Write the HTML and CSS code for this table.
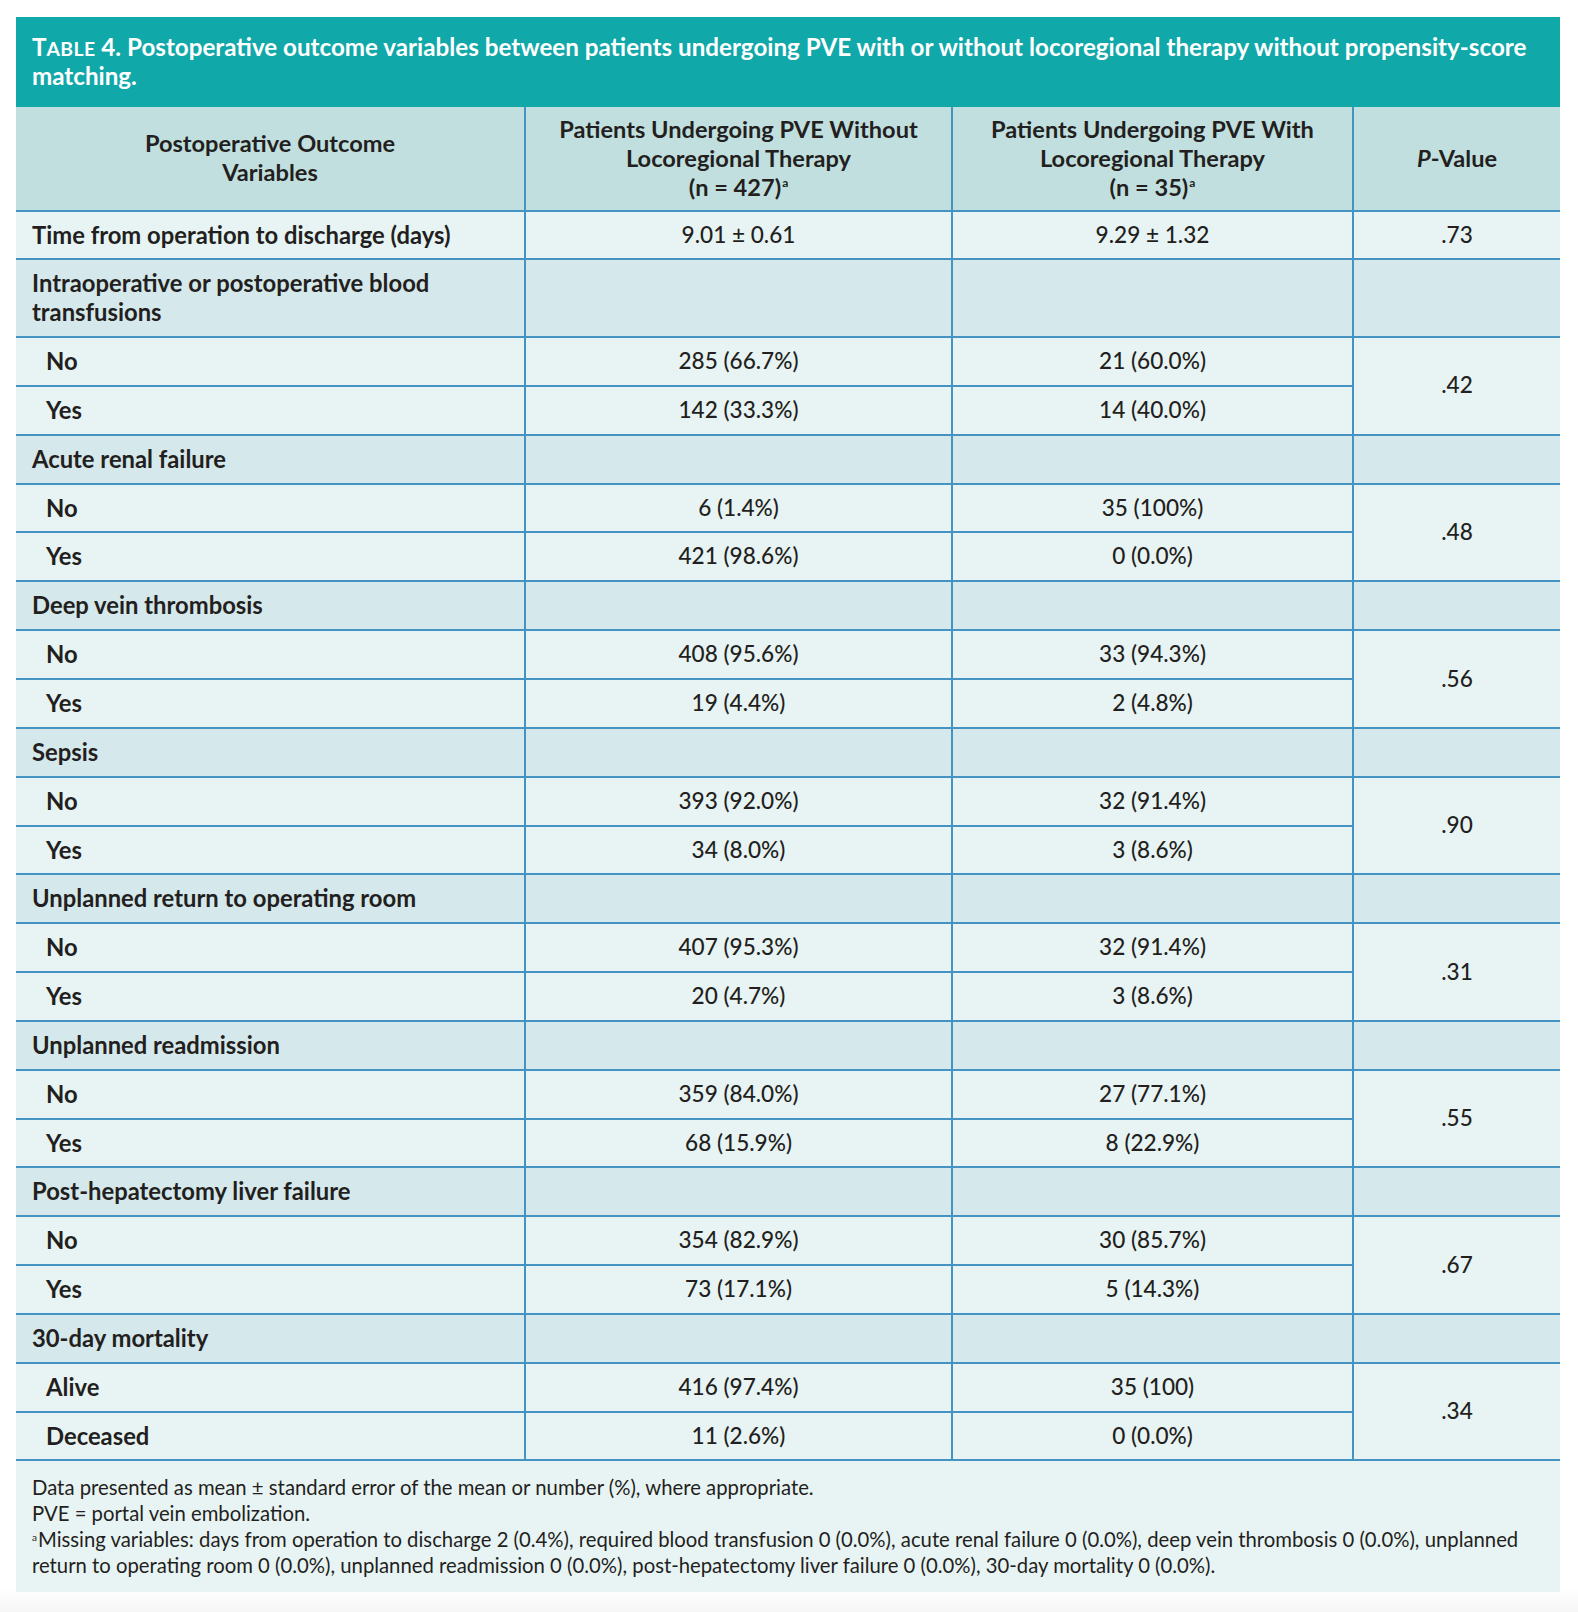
FILE: index.html
```html
<!DOCTYPE html>
<html lang="en">
<head>
<meta charset="utf-8">
<title>Table 4</title>
<link rel="stylesheet" href="styles.css">
</head>
<body>
<div class="page">
  <div class="table-box">
    <div class="caption">T<span class="sc">ABLE</span> 4. Postoperative outcome variables between patients undergoing PVE with or without locoregional therapy without propensity-score<br>matching.</div>
    <table class="data">
      <colgroup>
        <col class="c1"><col class="c2"><col class="c3"><col class="c4">
      </colgroup>
      <thead>
        <tr>
          <th>Postoperative Outcome<br>Variables</th>
          <th>Patients Undergoing PVE Without<br>Locoregional Therapy<br>(n = 427)<sup>a</sup></th>
          <th>Patients Undergoing PVE With<br>Locoregional Therapy<br>(n = 35)<sup>a</sup></th>
          <th><i>P</i>-Value</th>
        </tr>
      </thead>
      <tbody>
        <tr class="sub"><td class="label">Time from operation to discharge (days)</td><td>9.01 ± 0.61</td><td>9.29 ± 1.32</td><td>.73</td></tr>

        <tr class="cat"><td class="label">Intraoperative or postoperative blood<br>transfusions</td><td></td><td></td><td></td></tr>
        <tr class="sub"><td class="label indent">No</td><td>285 (66.7%)</td><td>21 (60.0%)</td><td rowspan="2">.42</td></tr>
        <tr class="sub"><td class="label indent">Yes</td><td>142 (33.3%)</td><td>14 (40.0%)</td></tr>

        <tr class="cat"><td class="label">Acute renal failure</td><td></td><td></td><td></td></tr>
        <tr class="sub"><td class="label indent">No</td><td>6 (1.4%)</td><td>35 (100%)</td><td rowspan="2">.48</td></tr>
        <tr class="sub"><td class="label indent">Yes</td><td>421 (98.6%)</td><td>0 (0.0%)</td></tr>

        <tr class="cat"><td class="label">Deep vein thrombosis</td><td></td><td></td><td></td></tr>
        <tr class="sub"><td class="label indent">No</td><td>408 (95.6%)</td><td>33 (94.3%)</td><td rowspan="2">.56</td></tr>
        <tr class="sub"><td class="label indent">Yes</td><td>19 (4.4%)</td><td>2 (4.8%)</td></tr>

        <tr class="cat"><td class="label">Sepsis</td><td></td><td></td><td></td></tr>
        <tr class="sub"><td class="label indent">No</td><td>393 (92.0%)</td><td>32 (91.4%)</td><td rowspan="2">.90</td></tr>
        <tr class="sub"><td class="label indent">Yes</td><td>34 (8.0%)</td><td>3 (8.6%)</td></tr>

        <tr class="cat"><td class="label">Unplanned return to operating room</td><td></td><td></td><td></td></tr>
        <tr class="sub"><td class="label indent">No</td><td>407 (95.3%)</td><td>32 (91.4%)</td><td rowspan="2">.31</td></tr>
        <tr class="sub"><td class="label indent">Yes</td><td>20 (4.7%)</td><td>3 (8.6%)</td></tr>

        <tr class="cat"><td class="label">Unplanned readmission</td><td></td><td></td><td></td></tr>
        <tr class="sub"><td class="label indent">No</td><td>359 (84.0%)</td><td>27 (77.1%)</td><td rowspan="2">.55</td></tr>
        <tr class="sub"><td class="label indent">Yes</td><td>68 (15.9%)</td><td>8 (22.9%)</td></tr>

        <tr class="cat"><td class="label">Post-hepatectomy liver failure</td><td></td><td></td><td></td></tr>
        <tr class="sub"><td class="label indent">No</td><td>354 (82.9%)</td><td>30 (85.7%)</td><td rowspan="2">.67</td></tr>
        <tr class="sub"><td class="label indent">Yes</td><td>73 (17.1%)</td><td>5 (14.3%)</td></tr>

        <tr class="cat"><td class="label">30-day mortality</td><td></td><td></td><td></td></tr>
        <tr class="sub"><td class="label indent">Alive</td><td>416 (97.4%)</td><td>35 (100)</td><td rowspan="2">.34</td></tr>
        <tr class="sub"><td class="label indent">Deceased</td><td>11 (2.6%)</td><td>0 (0.0%)</td></tr>
      </tbody>
    </table>
    <div class="notes">
      <p>Data presented as mean ± standard error of the mean or number (%), where appropriate.</p>
      <p>PVE = portal vein embolization.</p>
      <p><sup>a</sup>Missing variables: days from operation to discharge 2 (0.4%), required blood transfusion 0 (0.0%), acute renal failure 0 (0.0%), deep vein thrombosis 0 (0.0%), unplanned<br>return to operating room 0 (0.0%), unplanned readmission 0 (0.0%), post-hepatectomy liver failure 0 (0.0%), 30-day mortality 0 (0.0%).</p>
    </div>
  </div>
</div>
</body>
</html>
```

FILE: styles.css
```css
* { box-sizing: border-box; }
html, body {
  margin: 0;
  padding: 0;
  background: #ffffff;
}
body {
  font-family: Lato, "Noto Sans", sans-serif;
  color: #231f20;
}
.page {
  padding: 17px 18px 22px 16px;
  background: linear-gradient(to bottom, #ffffff 0, #ffffff 1588px, #f6f6f6 1612px);
  min-height: 1612px;
}
.table-box {
  width: 1544px;
}
.caption {
  background: #11a8a9;
  color: #ffffff;
  font-weight: 700;
  font-size: 24.2px;
  line-height: 29px;
  padding: 15px 16px 17px 16px;
}
.sc {
  font-size: 0.8em;
  line-height: 1;
  letter-spacing: 0.02em;
}
.data {
  width: 100%;
  border-collapse: collapse;
  table-layout: fixed;
}
.c1 { width: 509px; }
.c2 { width: 427px; }
.c3 { width: 401px; }
.c4 { width: 207px; }

.data th,
.data td {
  border: 2px solid #4493c3;
  line-height: 28.85px;
  text-align: center;
  vertical-align: middle;
}
.data th:first-child,
.data td:first-child { border-left: none; }
.data th:last-child,
.data tr:first-child td:last-child,
.data .cat td:last-child { border-right: none; }
.data th {
  border-top: none;
  background: #c1dfdf;
  font-weight: 700;
  font-size: 23.6px;
  padding: 8px 6px;
  height: 101px;
}
.data th i { font-style: italic; }
.data sup {
  font-size: 12px;
  line-height: 0;
  vertical-align: 9px;
  margin-left: 1px;
}
.data td {
  padding: 9px 16px;
  font-size: 22.6px;
  font-weight: 500;
  background: #e8f4f4;
}
.data td[rowspan] { border-right: none; }
.data .cat td { background: #d5e8eb; }
.data td.label {
  text-align: left;
  font-weight: 700;
  font-size: 23.8px;
}
.data td.indent { padding-left: 30px; }

.notes {
  background: #e8f4f4;
  padding: 14px 16px 13px 16px;
  font-size: 20.3px;
  line-height: 25.8px;
}
.notes p { margin: 0; }
.notes sup {
  font-size: 10px;
  line-height: 0;
  vertical-align: 6px;
  margin-right: 1px;
}
```
